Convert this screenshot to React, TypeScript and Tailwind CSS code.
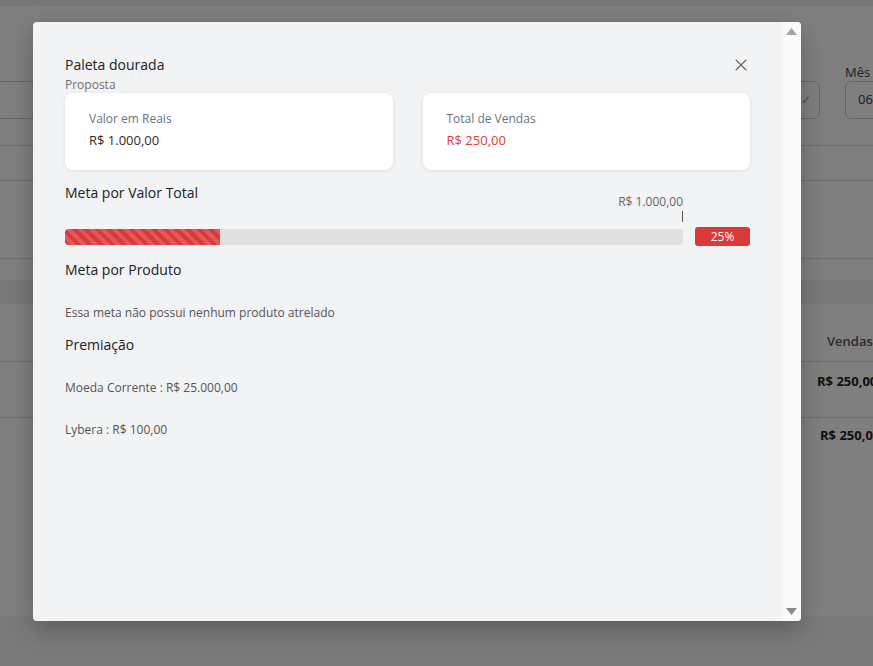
import { X } from 'lucide-react'

const font = { fontFamily: '"Open Sans", "Noto Sans", sans-serif' }

function BackgroundPage() {
  return (
    <div className="flex h-full flex-col bg-white text-[#333]">
      <div className="h-[6px] bg-[#eeeeee]" />
      <div className="flex h-[140px] items-start overflow-hidden border-b border-[#dddddd] pt-[57px]">
        <div className="-ml-[10px] mt-[18px] h-[38px] w-[300px] shrink-0 border-y border-[#cccccc]" />
        <div className="ml-auto mt-[18px] flex h-[38px] w-[80px] shrink-0 items-center justify-end rounded-r-md border border-[#cccccc] pr-[8px] text-[#999]">
          <span className="text-[12px]">✓</span>
        </div>
        <div className="-mr-[52px] ml-[25px] flex w-[80px] shrink-0 flex-col">
          <span className="text-[13px] leading-[18px] text-[#444]">Mês</span>
          <div className="flex h-[38px] items-center rounded-l-md border border-[#cccccc] pl-[12px] text-[13px]">06</div>
        </div>
      </div>
      <div className="h-[35px] border-b border-[#dddddd]" />
      <div className="h-[78px] border-b border-[#dddddd]" />
      <div className="h-[21px]" />
      <div className="h-[24px] bg-[#f0f0f0]" />
      <div className="flex h-[58px] items-end border-b border-[#dddddd] pb-[10px] pl-[827px] text-[13px] font-semibold whitespace-nowrap text-[#555]">
        Vendas
      </div>
      <div className="h-[56px] border-b border-[#dddddd] pt-[10px] pl-[817px] text-[13px] font-bold whitespace-nowrap text-[#222]">
        R$ 250,00
      </div>
      <div className="h-[198px] pt-[8px] pl-[820px] text-[13px] font-bold whitespace-nowrap text-[#222]">
        R$ 250,00
      </div>
      <div className="flex-1 bg-[#f5f5f5]" />
    </div>
  )
}

function InfoCard({ label, value, red }: { label: string; value: string; red?: boolean }) {
  return (
    <div className="flex-1 rounded-lg bg-white px-6 pt-[18px] pb-[21px] shadow-[0_1px_4px_rgba(0,0,0,0.08)]">
      <div className="text-[12px] leading-4 text-[#6b7280]">{label}</div>
      <div className={`mt-[4px] text-[13px] leading-[18px] ${red ? 'text-[#e53935]' : 'text-[#2b2b2b]'}`}>{value}</div>
    </div>
  )
}

export default function App() {
  return (
    <div className="relative h-[666px] w-[873px] overflow-hidden" style={font}>
      <BackgroundPage />
      <div className="absolute inset-0 bg-black/50" />

      <div className="absolute top-[22px] left-[33px] flex h-[599px] w-[768px] overflow-hidden rounded bg-[#f2f3f5] shadow-[0_8px_24px_rgba(0,0,0,0.25)]">
        <div className="flex-1 px-8 pt-[33px]">
          <div className="flex items-center justify-between">
            <h2 className="text-[14px] leading-5 text-[#212121]">Paleta dourada</h2>
            <X size={20} strokeWidth={1.3} className="-mr-[1px] text-[#666]" />
          </div>
          <div className="mt-[2px] text-[12px] leading-4 text-[#707070]">Proposta</div>

          <div className="flex gap-[30px]">
            <InfoCard label="Valor em Reais" value="R$ 1.000,00" />
            <InfoCard label="Total de Vendas" value="R$ 250,00" red />
          </div>

          <h3 className="mt-[13px] h-5 text-[14px] leading-5 text-[#212121]">Meta por Valor Total</h3>
          <div className="-mt-[9px] flex items-end gap-3">
            <div className="flex flex-1 flex-col items-end">
              <span className="text-[12px] leading-4 text-[#666]">R$ 1.000,00</span>
              <span className="mt-px h-[11px] w-px bg-[#555]" />
              <div className="mt-[7px] h-4 w-full overflow-hidden rounded bg-[#e0e0e0]">
                <div
                  className="h-full bg-[repeating-linear-gradient(45deg,#d63a3a_0px,#d63a3a_4px,#e05858_4px,#e05858_8px)]"
                  style={{ width: '25%' }}
                />
              </div>
            </div>
            <div className="-mb-[1px] flex h-[19px] w-[55px] items-center justify-center rounded-[3px] bg-[#db3939] text-[12px] font-medium text-white">
              25%
            </div>
          </div>

          <h3 className="mt-[15px] text-[14px] leading-5 text-[#212121]">Meta por Produto</h3>
          <p className="mt-[25px] text-[12px] leading-4 text-[#555]">Essa meta não possui nenhum produto atrelado</p>

          <h3 className="mt-[14px] text-[14px] leading-5 text-[#212121]">Premiação</h3>
          <p className="mt-[25px] text-[12px] leading-4 text-[#555]">Moeda Corrente : R$ 25.000,00</p>
          <p className="mt-[26px] text-[12px] leading-4 text-[#555]">Lybera : R$ 100,00</p>
        </div>

        <div className="flex w-[19px] flex-col items-center justify-between bg-[#fafafa] py-[6px]">
          <svg width="11" height="7" viewBox="0 0 11 7">
            <path d="M5.5 0 L11 7 L0 7 Z" fill="#a3a3a3" />
          </svg>
          <svg width="11" height="7" viewBox="0 0 11 7">
            <path d="M0 0 L11 0 L5.5 7 Z" fill="#8a8a8a" />
          </svg>
        </div>
      </div>
    </div>
  )
}
